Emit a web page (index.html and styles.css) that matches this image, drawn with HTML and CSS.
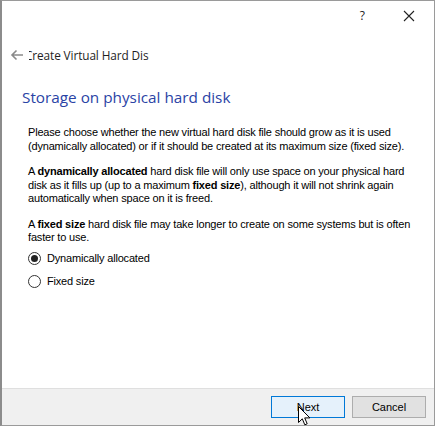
FILE: index.html
```html
<!DOCTYPE html>
<html>
<head>
<meta charset="utf-8">
<link rel="stylesheet" href="styles.css">
</head>
<body>
<div class="window">
  <div class="titlebar">
    <span class="help">?</span>
    <svg class="close" width="12" height="12" viewBox="0 0 12 12"><path d="M1 1L11 11M11 1L1 11" stroke="#222" stroke-width="1.1" fill="none"/></svg>
  </div>
  <div class="nav">
    <svg class="back" width="14" height="12" viewBox="0 0 14 12"><path d="M13 6H2M6.5 1.5L2 6L6.5 10.5" stroke="#8a8a8a" stroke-width="1.6" fill="none"/></svg>
    <div class="navclip"><span class="navtext">Create Virtual Hard Disk</span></div>
  </div>
  <div class="content">
    <h1 class="heading">Storage on physical hard disk</h1>
    <div class="body">
      <p>Please choose whether the new virtual hard disk file should grow as it is used (dynamically allocated) or if it should be created at its maximum size (fixed size).</p>
      <p>A <b>dynamically allocated</b> hard disk file will only use space on your physical hard disk as it fills up (up to a maximum <b>fixed size</b>), although it will not shrink again automatically when space on it is freed.</p>
      <p>A <b>fixed size</b> hard disk file may take longer to create on some systems but is often faster to use.</p>
      <div class="radios">
        <div class="radio"><span class="dot checked"></span><span>Dynamically allocated</span></div>
        <div class="radio"><span class="dot"></span><span>Fixed size</span></div>
      </div>
    </div>
  </div>
  <div class="footer">
    <button class="btn primary">Next</button>
    <button class="btn">Cancel</button>
    <svg class="cursor" width="13" height="20" viewBox="0 0 13 20"><path d="M0.5 0.5V16.5L4.3 12.8L6.8 18.8L9.2 17.8L6.7 11.9H11.9Z" fill="#fff" stroke="#000" stroke-width="1" stroke-linejoin="miter"/></svg>
  </div>
</div>
</body>
</html>
```
FILE: styles.css
```css
html, body {
  margin: 0;
  padding: 0;
  background: #ffffff;
}
.window {
  position: relative;
  box-sizing: border-box;
  width: 435px;
  height: 426px;
  border-left: 2px solid #8c8c8c;
  border-top: 1px solid #9a9a9a;
  border-right: 1px solid #9a9a9a;
  border-bottom: 1px solid #9a9a9a;
  display: flex;
  flex-direction: column;
  background: #fff;
  font-family: "Liberation Sans", Arial, sans-serif;
}
.titlebar {
  height: 29px;
  display: flex;
  align-items: center;
  justify-content: flex-end;
  padding-right: 19px;
  gap: 38px;
}
.help {
  font-family: "Open Sans", "Noto Sans", sans-serif;
  font-size: 12px;
  color: #222;
}
.close {
  display: block;
}
.nav {
  margin-top: 15px;
  height: 20px;
  display: flex;
  align-items: center;
  padding-left: 8px;
}
.back {
  display: block;
}
.navclip {
  margin-left: 5px;
  width: 120px;
  overflow: hidden;
  white-space: nowrap;
}
.navtext {
  display: inline-block;
  margin-left: -4px;
  font-family: "Open Sans", "Noto Sans", sans-serif;
  font-size: 11.8px;
  letter-spacing: -0.1px;
  color: #1e1e1e;
}
.content {
  flex: 1;
}
.heading {
  margin: 21px 0 0 20px;
  font-family: "Open Sans", "Noto Sans", sans-serif;
  font-weight: normal;
  font-size: 15.3px;
  line-height: 22px;
  color: #2a43a5;
}
.body {
  width: 384px;
  margin: 18px 0 0 26px;
  font-size: 11px;
  line-height: 13.5px;
  letter-spacing: -0.18px;
  color: #000;
}
.body p {
  margin: 0 0 12px 0;
}
.radios {
  margin-top: -7px;
  display: flex;
  flex-direction: column;
  gap: 5px;
}
.radio {
  height: 18px;
  display: flex;
  align-items: center;
  gap: 6px;
}
.dot {
  box-sizing: border-box;
  width: 13px;
  height: 13px;
  border: 1px solid #333;
  border-radius: 50%;
  display: flex;
  align-items: center;
  justify-content: center;
  background: #fff;
}
.dot.checked::after {
  content: "";
  width: 7px;
  height: 7px;
  border-radius: 50%;
  background: #222;
}
.footer {
  height: 36px;
  border-top: 1px solid #dfdfdf;
  background: #f0f0f0;
  display: flex;
  justify-content: flex-end;
  align-items: center;
  padding-right: 8px;
  gap: 7px;
  position: relative;
}
.btn {
  box-sizing: border-box;
  width: 74px;
  height: 22px;
  padding: 0;
  border: 1px solid #adadad;
  background: #e1e1e1;
  font-family: "Liberation Sans", Arial, sans-serif;
  font-size: 11px;
  color: #000;
}
.btn.primary {
  border-color: #0078d7;
  background: #e5f1fb;
}
.cursor {
  position: absolute;
  left: 296px;
  top: 17px;
}
```
